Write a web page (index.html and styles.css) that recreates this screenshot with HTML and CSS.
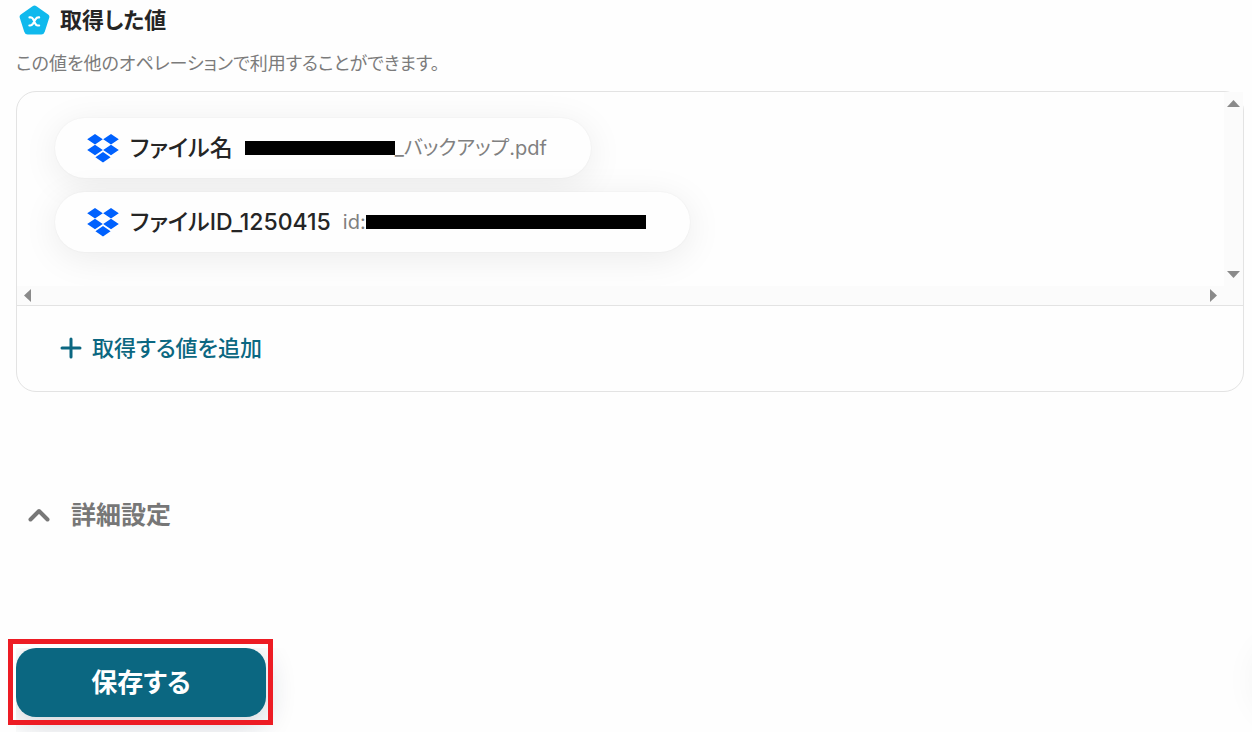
FILE: index.html
```html
<!DOCTYPE html>
<html lang="ja">
<head>
<meta charset="utf-8">
<meta name="viewport" content="width=device-width, initial-scale=1">
<title>取得した値</title>
<link rel="stylesheet" href="styles.css">
</head>
<body>
<svg class="defs" aria-hidden="true">
  <symbol id="dropbox" viewBox="0 0 32 29">
    <path d="M8 0l7.800 5.200L8 10.400.2 5.200zM24 0l7.800 5.200-7.800 5.200-7.800-5.200zM8 10.800l7.800 5.200L8 21.200.2 16zM24 10.800l7.800 5.200-7.800 5.200-7.800-5.200zM16 18l7.600 5.300-7.600 5.300-7.600-5.300z"/>
  </symbol>
</svg>
<main class="page">
  <header class="heading">
    <svg class="heading-icon" viewBox="0 0 32 30" aria-hidden="true">
      <path d="M14 .7q2-1.300 4 0l12.100 8.500q1.800 1.300 1.100 3.600l-4.600 14.400q-.8 2.800-3.600 2.800H9q-2.800 0-3.600-2.800L.8 12.800q-.7-2.300 1.100-3.600z" fill="#10b9ed"/>
      <path d="M10.800 12.300h1.400c1.300 0 1.900.8 2.500 2l2 4.400c.6 1.200 1.200 2 2.500 2h1.600M20.800 12.300h-.8c-1.500 0-2.200.8-3 2l-2.500 4.400c-.8 1.200-1.500 2-3 2h-.8" fill="none" stroke="#fff" stroke-width="2.200" stroke-linecap="round"/>
    </svg>
    <h1 class="heading-title">取得した値</h1>
  </header>
  <p class="description">この値を他のオペレーションで利用することができます。</p>

  <section class="panel">
    <div class="scroller">
      <ul class="values">
        <li class="chip">
          <svg class="chip-icon" aria-hidden="true"><use href="#dropbox"/></svg>
          <span class="chip-name">ファイル名</span>
          <span class="chip-value"><span class="mask"></span>_バックアップ.pdf</span>
        </li>
        <li class="chip">
          <svg class="chip-icon" aria-hidden="true"><use href="#dropbox"/></svg>
          <span class="chip-name">ファイルID_1250415</span>
          <span class="chip-value">id:<span class="mask mask-long"></span></span>
        </li>
      </ul>
      <div class="bar bar-vertical" aria-hidden="true">
        <svg class="arrow" viewBox="0 0 13 13"><path d="M0 10l6.500-7 6.500 7z"/></svg>
        <svg class="arrow" viewBox="0 0 13 13"><path d="M0 3l6.500 7L13 3z"/></svg>
      </div>
      <div class="bar bar-horizontal" aria-hidden="true">
        <svg class="arrow" viewBox="0 0 13 13"><path d="M10 0L3 6.500l7 6.500z"/></svg>
        <svg class="arrow" viewBox="0 0 13 13"><path d="M3 0l7 6.500L3 13z"/></svg>
      </div>
      <div class="bar"></div>
    </div>
    <div class="panel-footer">
      <button class="add" type="button">
        <svg class="add-icon" viewBox="0 0 22 22" aria-hidden="true"><path d="M11 2v18M2 11h18"/></svg>
        取得する値を追加
      </button>
    </div>
  </section>

  <button class="details" type="button" aria-expanded="false">
    <svg class="details-icon" viewBox="0 0 22 14" aria-hidden="true"><path d="M2.500 11.500L11 3l8.500 8.500"/></svg>
    詳細設定
  </button>

  <div class="actions">
    <div class="save-area">
      <button class="save" type="button">保存する</button>
    </div>
    <div class="highlight"></div>
  </div>
  <div class="floating-shade" aria-hidden="true"></div>
</main>
</body>
</html>
```
FILE: styles.css
```css
* {
  box-sizing: border-box;
}

body {
  margin: 0;
  background: #fefefe;
  color: #252525;
  font-family: Inter, "Noto Sans CJK JP", sans-serif;
  font-feature-settings: "palt";
}

button {
  border: 0;
  padding: 0;
  background: none;
  font: inherit;
  cursor: pointer;
}

.defs {
  position: absolute;
  width: 0;
  height: 0;
}

.page {
  position: relative;
  min-height: 100vh;
  padding: 4px 8px 0 16px;
  overflow: hidden;
}

.heading {
  display: flex;
  align-items: center;
  gap: 10px;
  height: 32px;
  padding-left: 3px;
}

.heading-icon {
  width: 31px;
  height: 30px;
}

.heading-title {
  margin: 0;
  font-size: 22px;
  font-weight: 600;
  line-height: 32px;
}

.description {
  margin: 16px 0 15px;
  color: #7b7b7b;
  font-size: 18px;
  line-height: 24px;
}

.panel {
  border: 1px solid #e3e3e3;
  border-radius: 20px;
}

.scroller {
  display: grid;
  grid-template-columns: 1fr 19px;
  grid-template-rows: 1fr 19px;
  border-bottom: 1px solid #e3e3e3;
}

.values {
  display: flex;
  flex-direction: column;
  align-items: flex-start;
  gap: 14px;
  margin: 0;
  padding: 26px 38px 34px;
  border-radius: 20px 0 0;
  overflow: hidden;
  list-style: none;
}

.chip {
  display: flex;
  align-items: center;
  height: 60px;
  padding: 0 44px 0 32px;
  border-radius: 30px;
  background: #fefefe;
  box-shadow: 0 6px 36px rgba(0, 0, 0, 0.08), 0 0 2px rgba(0, 0, 0, 0.06);
}

.chip-icon {
  width: 32px;
  height: 29px;
  margin-right: 11px;
  fill: #0061fe;
}

.chip-name {
  margin-right: 12px;
  font-size: 23px;
  font-weight: 500;
  line-height: 32px;
}

.chip-value {
  display: flex;
  align-items: center;
  color: #808080;
  font-size: 20px;
  line-height: 28px;
}

.mask {
  width: 150px;
  height: 14px;
  background: #000;
}

.mask-long {
  width: 280px;
}

.bar {
  display: flex;
  justify-content: space-between;
  background: #fbfbfb;
}

.bar-vertical {
  flex-direction: column;
  align-items: center;
  padding: 5px 0;
}

.bar-horizontal {
  align-items: center;
  padding: 0 4px;
}

.arrow {
  width: 13px;
  height: 13px;
  fill: #8a8a8a;
}

.panel-footer {
  padding: 24px 43px 25px;
}

.add {
  display: flex;
  align-items: center;
  gap: 10px;
  color: #0b6781;
  font-size: 22px;
  font-weight: 500;
  line-height: 36px;
}

.add-icon {
  width: 22px;
  height: 22px;
  fill: none;
  stroke: currentColor;
  stroke-width: 3;
  stroke-linecap: round;
}

.details {
  display: flex;
  align-items: center;
  gap: 21px;
  margin: 103px 0 0 12px;
  color: #777;
  font-size: 25px;
  font-weight: 600;
  line-height: 40px;
}

.details-icon {
  width: 22px;
  height: 14px;
  fill: none;
  stroke: currentColor;
  stroke-width: 4;
  stroke-linecap: round;
  stroke-linejoin: round;
}

.actions {
  position: relative;
  width: 250px;
  margin-top: 113px;
}

.save-area {
  width: 300px;
  height: 84px;
  overflow: hidden;
}

.save {
  width: 250px;
  height: 69px;
  border-radius: 20px;
  background: #0b6781;
  box-shadow: 0 8px 30px rgba(20, 40, 70, 0.2);
  color: #fff;
  font-size: 26px;
  font-weight: 700;
  line-height: 36px;
}

.highlight {
  position: absolute;
  inset: -9px -7px 7px -8px;
  border: 5px solid #ed1c24;
  pointer-events: none;
}

.floating-shade {
  position: absolute;
  right: -84px;
  bottom: 12px;
  width: 80px;
  height: 80px;
  border-radius: 50%;
  box-shadow: 0 0 36px rgba(0, 0, 0, 0.06);
}
```
